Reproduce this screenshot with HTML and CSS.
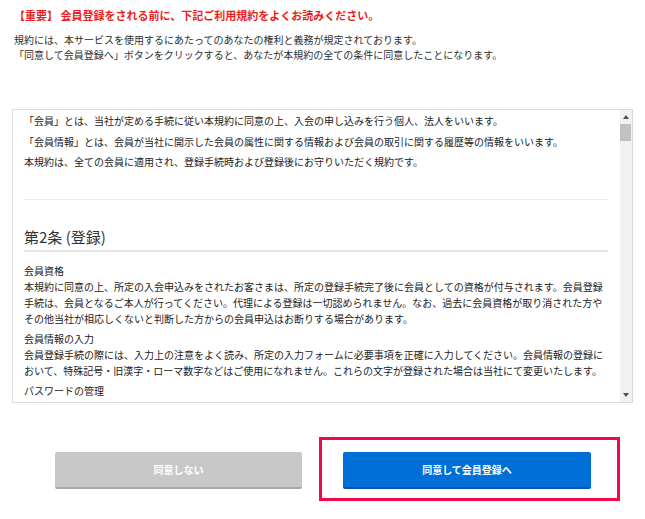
FILE: index.html
```html
<!DOCTYPE html>
<html lang="ja">
<head>
<meta charset="utf-8">
<title>会員規約</title>
<link rel="stylesheet" href="styles.css">
</head>
<body>
<div class="page">
  <p class="notice">【重要】 会員登録をされる前に、下記ご利用規約をよくお読みください。</p>
  <p class="intro">規約には、本サービスを使用するにあたってのあなたの権利と義務が規定されております。<br>「同意して会員登録へ」ボタンをクリックすると、あなたが本規約の全ての条件に同意したことになります。</p>

  <div class="terms">
    <div class="terms-body">
      <p class="para">「会員」とは、当社が定める手続に従い本規約に同意の上、入会の申し込みを行う個人、法人をいいます。</p>
      <p class="para">「会員情報」とは、会員が当社に開示した会員の属性に関する情報および会員の取引に関する履歴等の情報をいいます。</p>
      <p class="para">本規約は、全ての会員に適用され、登録手続時および登録後にお守りいただく規約です。</p>
      <hr class="divider">
      <h2 class="article">第2条 (登録)</h2>
      <dl class="clauses">
        <dt>会員資格</dt>
        <dd>本規約に同意の上、所定の入会申込みをされたお客さまは、所定の登録手続完了後に会員としての資格が付与されます。会員登録手続は、会員となるご本人が行ってください。代理による登録は一切認められません。なお、過去に会員資格が取り消された方やその他当社が相応しくないと判断した方からの会員申込はお断りする場合があります。</dd>
        <dt>会員情報の入力</dt>
        <dd>会員登録手続の際には、入力上の注意をよく読み、所定の入力フォームに必要事項を正確に入力してください。会員情報の登録において、特殊記号・旧漢字・ローマ数字などはご使用になれません。これらの文字が登録された場合は当社にて変更いたします。</dd>
        <dt>パスワードの管理</dt>
      </dl>
    </div>
    <div class="scrollbar">
      <div class="sb-btn"><span class="arrow-up"></span></div>
      <div class="sb-thumb"></div>
      <div class="sb-track"></div>
      <div class="sb-btn"><span class="arrow-down"></span></div>
    </div>
  </div>

  <div class="actions">
    <button class="btn btn-decline" type="button">同意しない</button>
    <div class="highlight">
      <button class="btn btn-agree" type="button">同意して会員登録へ</button>
    </div>
  </div>
</div>
</body>
</html>
```

FILE: styles.css
```css
html, body {
  margin: 0;
  padding: 0;
  background: #fff;
}

body {
  font-family: "Noto Sans CJK JP", "Noto Sans", sans-serif;
  color: #333;
}

.page {
  padding: 8px 0 0 12px;
}

.notice {
  margin: 0;
  padding-left: 2px;
  font-size: 11px;
  line-height: 15px;
  font-weight: 700;
  color: #ee1c1c;
}

.intro {
  margin: 9px 0 0;
  padding-left: 2px;
  font-size: 10px;
  line-height: 15px;
  color: #2e2e2e;
}

.terms {
  display: flex;
  width: 621px;
  height: 294px;
  box-sizing: border-box;
  margin-top: 47px;
  border: 1px solid #dadada;
  background: #fff;
}

.terms-body {
  flex: 1;
  overflow: hidden;
  padding: 3px 12px 0 11px;
  font-size: 10px;
  line-height: 16px;
  color: #222;
}

.para {
  margin: 0 0 4.5px;
}

.divider {
  margin: 29px 0 0;
  border: 0;
  border-top: 1px solid #ececec;
  height: 0;
}

.article {
  margin: 26px 0 0;
  padding-bottom: 2px;
  font-size: 15px;
  line-height: 22px;
  font-weight: 400;
  color: #333;
  border-bottom: 2px solid #e6e6e6;
}

.clauses {
  margin: 11px 0 0;
}

.clauses dt {
  margin: 0;
}

.clauses dd {
  margin: 0 0 4px;
}

.scrollbar {
  width: 12px;
  display: flex;
  flex-direction: column;
  background: #f1f1f1;
}

.sb-btn {
  height: 14px;
  display: flex;
  align-items: center;
  justify-content: center;
}

.arrow-up {
  width: 0;
  height: 0;
  border-left: 3.5px solid transparent;
  border-right: 3.5px solid transparent;
  border-bottom: 4px solid #505050;
}

.arrow-down {
  width: 0;
  height: 0;
  border-left: 3.5px solid transparent;
  border-right: 3.5px solid transparent;
  border-top: 4px solid #505050;
}

.sb-thumb {
  height: 17px;
  margin: 0 1px 0 0;
  background: #c1c1c1;
}

.sb-track {
  flex: 1;
}

.actions {
  display: flex;
  align-items: flex-start;
  margin-top: 34px;
  padding-left: 43px;
}

.btn {
  display: flex;
  align-items: center;
  justify-content: center;
  height: 37px;
  box-sizing: border-box;
  border: 0;
  border-radius: 2px;
  font-family: "Noto Sans CJK JP", "Noto Sans", sans-serif;
  font-size: 10px;
  font-weight: 700;
  color: #fff;
  padding: 0;
  cursor: pointer;
}

.btn-decline {
  width: 247px;
  margin-top: 15px;
  background: #c8c8c8;
  border-bottom: 2px solid #a8a8a8;
}

.highlight {
  margin-left: 17px;
  border: 3px solid #f5074b;
  padding: 12px 26px 9px 21px;
}

.btn-agree {
  width: 248px;
  background: #006fd8;
  border-bottom: 2px solid #0056b0;
}
```
